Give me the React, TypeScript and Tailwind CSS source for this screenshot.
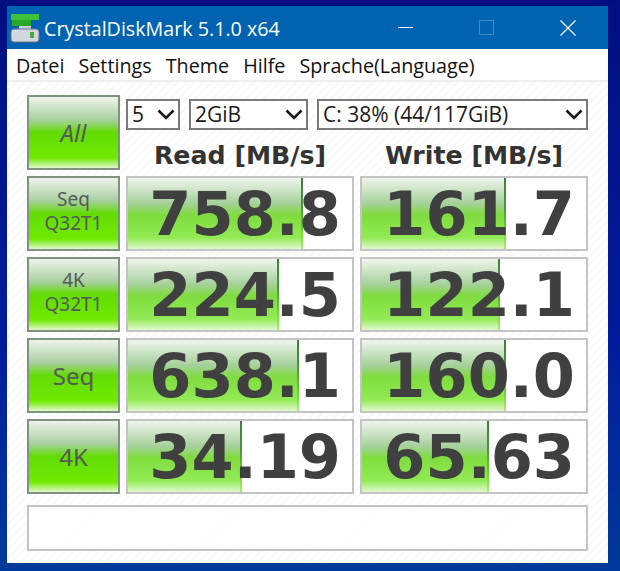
import React from 'react';

const rows = [
  { label: ['Seq', 'Q32T1'], read: '758.8', readBar: 175, write: '161.7', writeBar: 144 },
  { label: ['4K', 'Q32T1'], read: '224.5', readBar: 151, write: '122.1', writeBar: 138 },
  { label: ['Seq'], read: '638.1', readBar: 171, write: '160.0', writeBar: 144 },
  { label: ['4K'], read: '34.19', readBar: 114, write: '65.63', writeBar: 127 },
];

const buttonBg = 'bg-[linear-gradient(180deg,#eef3ec_0%,#a9cfa0_32%,#62dc04_50%,#70ea02_86%,#e2f8cf_100%)]';

function Chevron() {
  return (
    <svg width="18" height="11" viewBox="0 0 18 11" className="shrink-0">
      <path d="M1.5 1.5 L9 9 L16.5 1.5" fill="none" stroke="#1a1a1a" strokeWidth="2.6" />
    </svg>
  );
}

function Select({ value, className }: { value: string; className: string }) {
  return (
    <div className={`h-[31px] flex items-center justify-between pl-[4px] pr-[3px] bg-white border-2 border-[#7a7a7a] text-[21px] text-[#1a1a1a] font-['Open_Sans',sans-serif] ${className}`}>
      <span className="pt-px">{value}</span>
      <Chevron />
    </div>
  );
}

function TestButton({ lines, tall }: { lines: string[]; tall?: boolean }) {
  const single = lines.length === 1;
  return (
    <div className={`flex flex-col items-center justify-center border-2 border-[#7f937f] text-[#55595a] font-['Noto_Sans',sans-serif] ${buttonBg} ${single ? 'text-[24px]' : 'text-[19px] leading-[24px] pb-[5px]'} ${tall ? 'italic' : ''}`}>
      {lines.map((l) => (
        <span key={l}>{l}</span>
      ))}
    </div>
  );
}

function Cell({ value, bar }: { value: string; bar: number }) {
  return (
    <div className="relative h-[75px] bg-white border-2 border-[#c4c4c4] overflow-hidden">
      <div
        className="absolute left-0 top-0 bottom-0 bg-[linear-gradient(180deg,#f0f5ee_0%,#a5d09a_36%,#7fdc3e_52%,#92ea55_84%,#e2f8cf_100%)]"
        style={{ width: bar }}
      >
        <div className="absolute right-0 top-0 bottom-0 w-[2px] bg-[linear-gradient(180deg,#3f7f3f_0%,#4f9a3f_45%,#6fd82a_75%,#a8ee70_100%)]" />
      </div>
      <div className="relative h-full flex items-center justify-end pr-[11px] pt-[2px] text-[60.6px] font-bold text-[#404040] font-['DejaVu_Sans',sans-serif] leading-none">
        {value}
      </div>
    </div>
  );
}

export default function App() {
  return (
    <div className="w-[620px] h-[571px] overflow-hidden pt-[6px] pl-[7px] bg-[linear-gradient(180deg,#000f80_0%,#001c9c_60%,#003a9a_100%)]">
      <div className="w-[601px] h-[557px] flex flex-col bg-white">
        <div className="h-[43px] shrink-0 flex items-center bg-[#0063b1] text-white font-['Open_Sans',sans-serif]">
          <svg width="30" height="30" viewBox="0 0 30 30" className="ml-[3px] mt-[1px] shrink-0">
            <rect x="1" y="1" width="28" height="6" fill="#3fc23a" />
            <rect x="2" y="7" width="19" height="6" fill="#29a82a" />
            <rect x="9" y="13" width="12" height="3" fill="#c9ced6" />
            <rect x="1" y="16" width="28" height="13" rx="3" fill="#d3d7e2" stroke="#70747c" />
            <rect x="20" y="19" width="4" height="6" fill="#3fae3a" />
          </svg>
          <span className="ml-[4px] mt-[2px] text-[19.7px] leading-none">CrystalDiskMark 5.1.0 x64</span>
          <div className="ml-auto flex items-center">
            <div className="w-[15px] h-px bg-white mr-[66px]" />
            <div className="w-[15px] h-[15px] border border-[#3d8ac8] mr-[66px]" />
            <svg width="16" height="16" viewBox="0 0 16 16" className="mr-[32px]">
              <path d="M0.5 0.5 L15.5 15.5 M15.5 0.5 L0.5 15.5" stroke="white" strokeWidth="1.2" />
            </svg>
          </div>
        </div>
        <div className="h-[33px] shrink-0 flex items-center gap-[14px] pl-[9px] pt-[3px] border-b-2 border-[#f0f0f0] text-[19.75px] text-[#111] font-['Open_Sans',sans-serif]">
          <span>Datei</span>
          <span>Settings</span>
          <span>Theme</span>
          <span>Hilfe</span>
          <span>Sprache(Language)</span>
        </div>
        <div className="flex-1 pt-[13px] pl-[20px] bg-[repeating-linear-gradient(135deg,#f9f9f9_0px,#f9f9f9_2px,#ffffff_2px,#ffffff_6px)]">
          <div className="grid grid-cols-[93px_228px_228px] gap-[6px]">
            <div className="h-[75px]">
              <div className="h-full grid">
                <TestButton lines={['All']} tall />
              </div>
            </div>
            <div className="col-span-2 flex flex-col">
              <div className="flex gap-[9px] mt-[4px]">
                <Select value="5" className="w-[54px]" />
                <Select value="2GiB" className="w-[119px]" />
                <Select value="C: 38% (44/117GiB)" className="w-[271px]" />
              </div>
              <div className="grid grid-cols-2 gap-[6px] mt-[11px] text-[25.25px] leading-[29px] font-bold text-[#333] text-center font-['DejaVu_Sans',sans-serif]">
                <span>Read [MB/s]</span>
                <span>Write [MB/s]</span>
              </div>
            </div>
            {rows.map((r) => (
              <React.Fragment key={r.read}>
                <TestButton lines={r.label} />
                <Cell value={r.read} bar={r.readBar} />
                <Cell value={r.write} bar={r.writeBar} />
              </React.Fragment>
            ))}
          </div>
          <div className="w-[561px] h-[46px] mt-[11px] border-2 border-[#c4c4c4] bg-white/60" />
        </div>
      </div>
    </div>
  );
}
